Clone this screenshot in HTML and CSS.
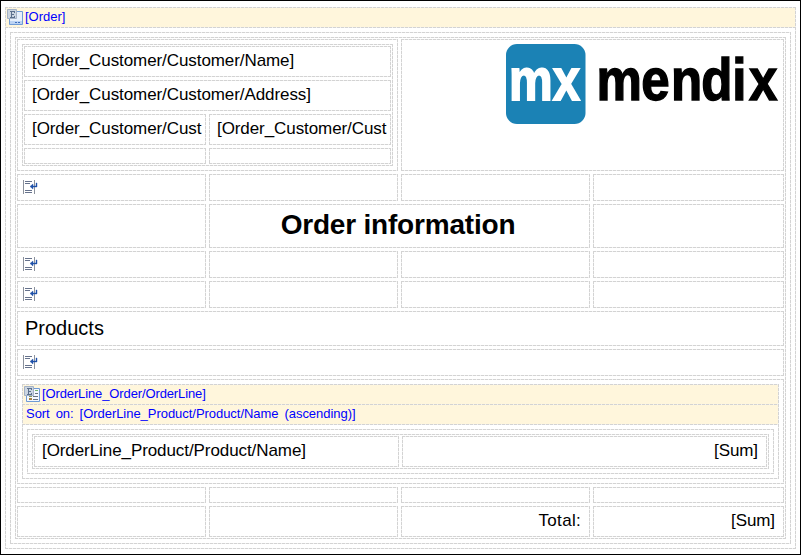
FILE: index.html
```html
<!DOCTYPE html>
<html lang="en">
<head>
<meta charset="utf-8">
<title>Order document</title>
<link rel="stylesheet" href="styles.css">
</head>
<body>
<svg class="defs" width="0" height="0" aria-hidden="true">
  <symbol id="break" viewBox="0 0 15 14">
    <path d="M0 0h1v14H0zM11 0h1v14h-1z" fill="#8b919c"/>
    <path d="M2 1h7v1H2zM2 3h5v1H2zM2 10h7v1H2zM2 12h7v1H2z" fill="#66728c"/>
    <path d="M7 6.5L10 4v2h3V3h1v4h-4v2z" fill="#1f50a8" stroke="#1f50a8" stroke-width=".4"/>
  </symbol>
  <symbol id="view" viewBox="0 0 16 16">
    <path d="M5.5 2.5h10v13h-13v-6" fill="#e6effb" stroke="#6f9bd6"/>
    <path d="M3 12h12v3H3z" fill="#bcd3f3"/>
    <path d="M8 13h2v1H8zM11 13h2v1h-2z" fill="#3f6fbc"/>
    <path d="M.5 .5h9v9h-9z" fill="#cbd5e1" stroke="#a3b1c5"/>
    <path d="M3 2h5v2H7V3H5v2h2v1H5v2h2V7h1v2H3V8h1V3H3z" fill="#5b6f8c"/>
  </symbol>
  <symbol id="list" viewBox="0 0 16 16">
    <path d="M5.5 2.5h10v13h-13v-6" fill="#f4f8fe" stroke="#6f9bd6"/>
    <path d="M11 4h3v1h-3z" fill="#77b66b"/>
    <path d="M11 7h3v1h-3zM9 10h5v1H9zM9 13h5v1H9z" fill="#68727f"/>
    <path d="M5 10h3v1H5z" fill="#8a9a58"/><path d="M5 12h3v2H5z" fill="#a98040"/>
    <path d="M.5 .5h9v9h-9z" fill="#cbd5e1" stroke="#a3b1c5"/>
    <path d="M3 2h5v2H7V3H5v2h2v1H5v2h2V7h1v2H3V8h1V3H3z" fill="#5b6f8c"/>
  </symbol>
</svg>
<main class="page">
  <section class="view d">
    <header class="bar d"><svg class="ico"><use href="#view"/></svg><span>[Order]</span></header>
    <div class="body d">
      <div class="table main d">
        <div class="cell half d">
          <div class="table address d">
            <div class="cell full d"><span class="t">[Order_Customer/Customer/Name]</span></div>
            <div class="cell full d"><span class="t">[Order_Customer/Customer/Address]</span></div>
            <div class="cell d"><span class="t">[Order_Customer/Cust</span></div>
            <div class="cell d"><span class="t">[Order_Customer/Cust</span></div>
            <div class="cell d"></div><div class="cell d"></div>
          </div>
        </div>
        <div class="cell half logo-cell d">
          <svg class="logo" viewBox="0 0 272 80" width="272" height="80">
            <rect width="79.5" height="80" rx="11" fill="#1b82b5"/>
            <text class="mx" x="3" y="56" textLength="71" lengthAdjust="spacingAndGlyphs">mx</text>
            <text class="word" transform="scale(.87 1)" x="104.1 155.5 189.6 224.5 260.2 279.2" y="56">mendix</text>
          </svg>
        </div>

        <div class="cell d"><svg class="brk"><use href="#break"/></svg></div><div class="cell d"></div><div class="cell d"></div><div class="cell d"></div>

        <div class="cell d"></div><div class="cell half title d"><h1>Order information</h1></div><div class="cell d"></div>

        <div class="cell d"><svg class="brk"><use href="#break"/></svg></div><div class="cell d"></div><div class="cell d"></div><div class="cell d"></div>
        <div class="cell d"><svg class="brk"><use href="#break"/></svg></div><div class="cell d"></div><div class="cell d"></div><div class="cell d"></div>

        <div class="cell full d"><h2>Products</h2></div>
        <div class="cell full d"><svg class="brk"><use href="#break"/></svg></div>

        <div class="cell full d">
          <section class="lines d">
            <header class="bar d"><svg class="ico"><use href="#list"/></svg><span class="entity">[OrderLine_Order/OrderLine]</span></header>
            <div class="bar sort d"><span>Sort on: [OrderLine_Product/Product/Name (ascending)]</span></div>
            <div class="lines-body d">
              <div class="table row d">
                <div class="cell d"><span class="t">[OrderLine_Product/Product/Name]</span></div>
                <div class="cell right d"><span class="t">[Sum]</span></div>
              </div>
            </div>
          </section>
        </div>

        <div class="cell d"></div><div class="cell d"></div><div class="cell d"></div><div class="cell d"></div>
        <div class="cell d"></div><div class="cell d"></div><div class="cell right d"><span class="t total">Total:</span></div><div class="cell right d"><span class="t">[Sum]</span></div>
      </div>
    </div>
  </section>
</main>
</body>
</html>
```
FILE: styles.css
```css
* { box-sizing: border-box; }
body { margin: 0; background: #fff; color: #000; font-family: "Liberation Sans", Arial, sans-serif; }
.defs { display: block; position: absolute; }
.page { width: 801px; height: 555px; border: 1px solid #000; padding: 6px 4px 5px; overflow: hidden; }

/* one-pixel dashed outline */
.d {
  --h: repeating-linear-gradient(90deg, #d3d3d3 0 3px, #f0f0f0 3px 4px);
  --v: repeating-linear-gradient(180deg, #d3d3d3 0 3px, #f0f0f0 3px 4px);
  background-image: var(--h), var(--h), var(--v), var(--v);
  background-position: top, bottom, left, right;
  background-size: 100% 1px, 100% 1px, 1px 100%, 1px 100%;
  background-repeat: no-repeat;
}

.view { height: 542px; width: 791px; }
.bar { height: 21px; background-color: #fff6dc; color: #00f; font-size: 13px; line-height: 20px; display: flex; padding: 2px; gap: 2px; }
.bar span { margin-top: -2px; white-space: pre; }
.bar .ico { width: 16px; height: 16px; flex: none; }
.bar .entity { letter-spacing: -.12px; }
.body { margin: 4px 5px 0; height: 512px; padding: 5px; }

.table { display: grid; gap: 3px; padding: 2px; }
.main { height: 502px; grid-template-columns: 189px 189px 189px 191px; grid-template-rows: 132px 27px 44px 27px 27px 35px 27px 105px 16px 31px; }
.cell { overflow: hidden; min-width: 0; }
.half { grid-column: span 2; }
.full { grid-column: 1 / -1; }
.t { display: block; margin: 0 2px 0 8px; font-size: 17px; letter-spacing: -.08px; line-height: 29px; white-space: nowrap; }
.right .t { text-align: right; margin-right: 9px; }
.right .total { letter-spacing: .3px; }

.address { margin: 5px; width: 371px; height: 122px; grid-template-columns: 182px 182px; grid-template-rows: 31px 31px 31px 16px; }
.logo-cell { display: flex; justify-content: flex-end; padding: 5px 6px; }
.logo { display: block; overflow: visible; font-weight: bold; font-size: 58.7px; }
.mx { fill: #fff; stroke: #fff; stroke-width: 1.8; }
.word { fill: #000; stroke: #000; stroke-width: 1.4; }
.brk { display: block; width: 15px; height: 14px; margin: 6px; }
h1, h2 { margin: 0; }
h1 { font-size: 28px; line-height: 42px; text-align: center; letter-spacing: -.2px; padding-right: 3px; }
h2 { font-size: 20px; line-height: 35px; font-weight: normal; padding-left: 8px; }

.lines { margin: 5px; height: 95px; width: 757px; }
.sort { margin-top: -1px; padding-left: 4px; word-spacing: 2.4px; letter-spacing: -.04px; }
.lines-body { margin: 4px 5px 0; height: 45px; padding: 5px; }
.row { height: 35px; grid-template-columns: 365px 365px; grid-template-rows: 31px; }
```
